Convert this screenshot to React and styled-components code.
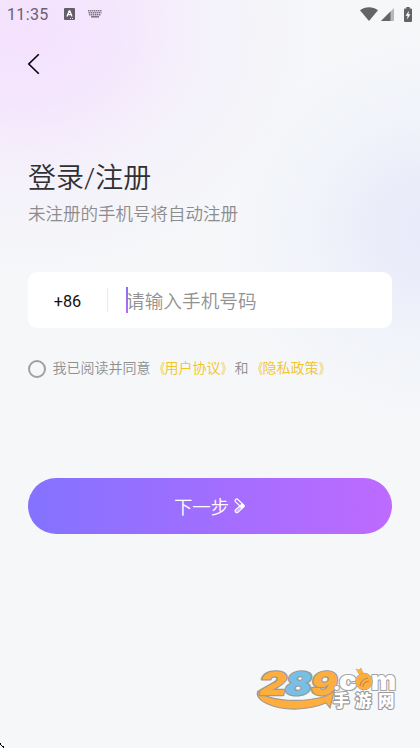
import React from 'react'
import styled, { createGlobalStyle } from 'styled-components'

const GlobalStyle = createGlobalStyle`
  body {
    margin: 0;
    background: #f5f7f9;
  }
  * {
    box-sizing: border-box;
  }
`

const Container = styled.div`
  position: relative;
  display: flex;
  flex-direction: column;
  width: 420px;
  height: 748px;
  overflow: hidden;
  font-family: Roboto, "Noto Sans CJK SC", sans-serif;
  background:
    radial-gradient(ellipse 290px 240px at 25px 30px, #f4e1fe 0%, rgba(244, 227, 254, 0.85) 28%, rgba(244, 233, 252, 0.4) 62%, rgba(245, 247, 249, 0) 100%),
    radial-gradient(ellipse 200px 190px at 428px 228px, #e8eafa 0%, rgba(233, 235, 250, 0.85) 28%, rgba(238, 241, 251, 0.5) 62%, rgba(245, 247, 249, 0) 100%),
    #f5f7f9;
`

const StatusBar = styled.div`
  display: flex;
  align-items: center;
  height: 28px;
  padding: 0 8px 0 7px;
  color: #686070;
`
const Clock = styled.span`
  width: 57px;
  padding-top: 2px;
  font-size: 16px;
  line-height: 28px;
  letter-spacing: 0.35px;
`
const StatusIcons = styled.div`
  display: flex;
  align-items: center;
  margin-left: auto;
`
const Icon = styled.svg`
  display: block;
  flex: none;
  margin-left: ${({ $gap }) => $gap || 0}px;
`

const BackButton = styled.button`
  display: flex;
  width: 24px;
  height: 24px;
  margin: 24px 0 0 21px;
  padding: 0;
  border: 0;
  background: none;
`

const Content = styled.main`
  display: flex;
  flex-direction: column;
  padding: 82px 28px 0;
  font-weight: 350;
`
const Title = styled.h1`
  margin: 0;
  font-size: 28px;
  font-weight: 350;
  line-height: 42px;
  color: #303030;
`
const SubTitle = styled.p`
  margin: 1px 0 0;
  font-size: 17.5px;
  line-height: 26px;
  color: #8c8c8e;
`
const PhoneField = styled.div`
  display: flex;
  align-items: center;
  height: 56px;
  margin-top: 45px;
  border-radius: 9px;
  background: #fff;
`
const AreaCode = styled.span`
  width: 79px;
  padding-top: 2px;
  font-size: 16.3px;
  font-weight: 400;
  text-align: center;
  color: #111;
`
const Divider = styled.span`
  width: 1px;
  height: 24px;
  margin-right: 18px;
  background: #ebebed;
`
const Caret = styled.span`
  width: 2px;
  height: 26px;
  margin-right: -2px;
  background: linear-gradient(#8570f4, #b76cf5);
`
const Placeholder = styled.span`
  padding-bottom: 1px;
  font-size: 18.67px;
  color: #929292;
`
const Agreement = styled.div`
  display: flex;
  align-items: center;
  height: 24px;
  margin-top: 29px;
  font-size: 14px;
  line-height: 20px;
  color: #909090;
`
const Radio = styled.span`
  width: 18px;
  height: 18px;
  margin-right: 6.5px;
  border: 2px solid #a0a0a0;
  border-radius: 50%;
`
const Terms = styled.span`
  padding-bottom: 2px;
`
const Link = styled.span`
  color: #f2c41c;
`
const Bracket = styled.span`
  display: inline-block;
  transform: scaleX(0.72);
  transform-origin: ${({ $side }) => $side};
`
const NextButton = styled.button`
  display: flex;
  align-items: center;
  justify-content: center;
  height: 56px;
  margin-top: 97px;
  padding: 0;
  border: 0;
  border-radius: 28px;
  background: linear-gradient(90deg, #8472ff, #be6aff);
  font-family: inherit;
  font-size: 18.4px;
  font-weight: 350;
  color: #fff;
`
const Watermark = styled.svg`
  display: block;
  flex: none;
  align-self: flex-end;
  margin: 122px 20px 0 0;
`
const CornerMark = styled.svg`
  position: absolute;
  left: 0;
  bottom: 0;
`

const InputBadge = () => (
  <Icon width="11" height="12" viewBox="0 0 11 12">
    <rect width="11" height="12" rx="1" fill="#655d6b" />
    <path d="M3 8.5 5.2 3h.6L8 8.5M3.9 6.7h3.2" fill="none" stroke="#fff" strokeWidth="1.3" />
    <path d="M6 10.5h1M8 10.5h1" stroke="#fff" strokeWidth=".8" />
  </Icon>
)

const KeyboardIcon = () => (
  <Icon $gap={13} width="14" height="8" viewBox="0 0 14 8">
    <path d="M0 .8h14M.5 2.8h13M1 4.8h12" stroke="#817888" strokeWidth="1.5" strokeDasharray="1.5 .5" />
    <path d="M3 6.8h8" stroke="#817888" strokeWidth="1.6" />
  </Icon>
)

const WifiIcon = () => (
  <Icon width="18" height="14" viewBox="0 0 18 14">
    <path d="M0 3.2C5-.9 13-.9 18 3.2L9 14Z" fill="#636466" />
  </Icon>
)

const SignalIcon = () => (
  <Icon $gap={3} width="13" height="13" viewBox="0 0 13 13">
    <path d="M0 13 13 0v13Z" fill="#b7b8ba" />
    <path d="M0 13 9.5 3.5V13Z" fill="#636466" />
  </Icon>
)

const BatteryIcon = () => (
  <Icon $gap={10} width="8" height="15" viewBox="0 0 8 15">
    <path d="M2.3 0h3.4v1.4H7q1 0 1 1V14q0 1-1 1H1q-1 0-1-1V2.4q0-1 1-1h1.3Z" fill="#636466" />
    <path d="M4.9 3.8 1.6 8.8h2L3.1 12.6 6.4 7.3h-2Z" fill="#fff" />
  </Icon>
)

const BackIcon = () => (
  <Icon width="24" height="24" viewBox="0 0 24 24">
    <path d="M17.8 2.2 7.8 12l10 9.8" fill="none" stroke="#000" strokeWidth="1.6" />
  </Icon>
)

const NextIcon = () => (
  <Icon $gap={5} width="12" height="16" viewBox="0 0 12 16">
    <path d="m2.7 2.7 5.5 5.2" fill="none" stroke="#fff" strokeWidth="4.4" strokeLinecap="round" />
    <path d="m2.7 2.7 5.1 4.8" fill="none" stroke="#a973ff" strokeWidth="2.2" strokeLinecap="round" />
    <path d="m2.8 13 5.6-5.1" fill="none" stroke="#fff" strokeWidth="4.4" strokeLinecap="round" />
    <path d="m2.8 13 2.9-2.6" fill="none" stroke="#cdb0ff" strokeWidth="2.4" strokeLinecap="round" />
  </Icon>
)

const Logo = () => (
  <Watermark width="146" height="60" viewBox="0 -10 146 60">
    <path d="M4 25C-1 34 20 44 44 43q16-1 28-6l4 5 5-20-11 6 2 2C50 37 16 36 4 25Z" fill="#ffad3d" stroke="#a09a8e" strokeWidth="1.2" />
    <g fontFamily="Inter, sans-serif" fontWeight="900" strokeLinejoin="round" paintOrder="stroke">
      <g transform="translate(0 28.5) skewX(-12)" fontSize="32" stroke="#9b9b95" strokeWidth="2.4">
        <text x="3.5" textLength="27" lengthAdjust="spacingAndGlyphs" fill="#ffad3d">2</text>
        <text x="29.5" textLength="26" lengthAdjust="spacingAndGlyphs" fill="#77bfe7">8</text>
        <text x="55" textLength="26" lengthAdjust="spacingAndGlyphs" fill="#ffad3d">9</text>
      </g>
      <g fontSize="27" fill="#fff" stroke="#a3a3a3" strokeWidth="2.2">
        <text x="79" y="24" fontSize="20">.</text>
        <text x="85" y="24" textLength="18" lengthAdjust="spacingAndGlyphs">c</text>
        <text x="117" y="24" textLength="25" lengthAdjust="spacingAndGlyphs">m</text>
      </g>
      <circle cx="110" cy="15.5" r="8.3" fill="#ffad3d" stroke="#a29b90" />
      <path d="M106 20q1-7 8-8M109 21q0-5 6-6" fill="none" stroke="#b98a4a" strokeWidth="1.1" />
      <path d="m105 8-3-5 3 1 2-2 2 5Z" fill="#ffad3d" stroke="#a29b90" strokeWidth=".6" />
      <g fontFamily="Noto Sans CJK SC, sans-serif" fontSize="16.5" fill="#fff" stroke="#999" strokeWidth="2.2">
        <text x="79" y="41">手</text>
        <text x="101" y="41">游</text>
        <text x="124" y="41">网</text>
      </g>
    </g>
  </Watermark>
)

const TermsLink = ({ children }) => (
  <Link>
    <Bracket $side="right">《</Bracket>
    {children}
    <Bracket $side="left">》</Bracket>
  </Link>
)

export default function App() {
  return (
    <Container>
      <GlobalStyle />
      <StatusBar>
        <Clock>11:35</Clock>
        <InputBadge />
        <KeyboardIcon />
        <StatusIcons>
          <WifiIcon />
          <SignalIcon />
          <BatteryIcon />
        </StatusIcons>
      </StatusBar>
      <BackButton aria-label="返回">
        <BackIcon />
      </BackButton>

      <Content>
        <Title>登录/注册</Title>
        <SubTitle>未注册的手机号将自动注册</SubTitle>
        <PhoneField>
          <AreaCode>+86</AreaCode>
          <Divider />
          <Caret />
          <Placeholder>请输入手机号码</Placeholder>
        </PhoneField>
        <Agreement>
          <Radio />
          <Terms>
            我已阅读并同意<TermsLink>用户协议</TermsLink>和<TermsLink>隐私政策</TermsLink>
          </Terms>
        </Agreement>
        <NextButton>
          下一步
          <NextIcon />
        </NextButton>
      </Content>

      <Logo />
      <CornerMark width="4" height="5" viewBox="0 0 4 5">
        <path d="M0 0h1v2H0ZM1 2h1v1H1ZM2 3h2v1H2ZM3 4h1v1H3Z" fill="#000" />
      </CornerMark>
    </Container>
  )
}
